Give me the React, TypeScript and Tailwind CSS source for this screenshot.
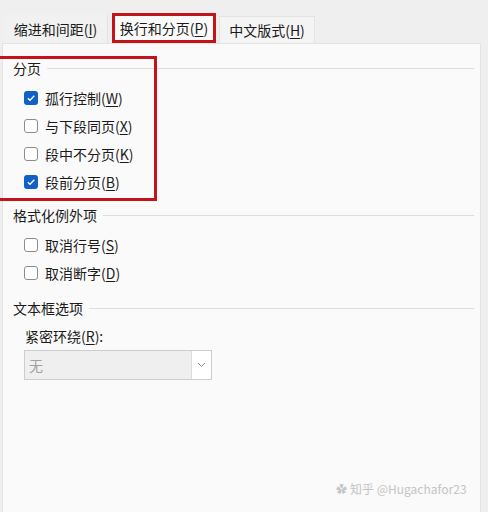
import React from "react";

const font = { fontFamily: '"Noto Sans CJK SC", "Noto Sans", sans-serif' };

function Check({ checked }: { checked: boolean }) {
  if (checked) {
    return (
      <span className="w-[14px] h-[14px] rounded-[3px] bg-[#1160c4] flex items-center justify-center">
        <svg width="10" height="10" viewBox="0 0 10 10">
          <path d="M1.8 5.2 L4 7.3 L8.3 2.8" stroke="#fff" strokeWidth="1.3" fill="none" />
        </svg>
      </span>
    );
  }
  return <span className="w-[14px] h-[14px] rounded-[3px] border border-[#8c8c8c] bg-white" />;
}

function Row({ checked, label, k }: { checked: boolean; label: string; k: string }) {
  return (
    <div className="h-[28px] flex items-center pl-[21px] gap-[7px]">
      <Check checked={checked} />
      <span className="text-[14px] text-[#1a1a1a] leading-none">
        {label}(<span className="underline underline-offset-2">{k}</span>)
      </span>
    </div>
  );
}

function Heading({ text, mt }: { text: string; mt: string }) {
  return (
    <div className={`h-[20px] flex items-center pl-[10px] pr-[6px] ${mt}`}>
      <span className="text-[14px] text-[#1a1a1a] leading-none mr-[6px]">{text}</span>
      <div className="flex-1 h-px bg-[#dedede]" />
    </div>
  );
}

export default function App() {
  return (
    <div className="w-[488px] h-[512px] bg-[#efefef] relative overflow-hidden flex flex-col" style={font}>
      <div className="flex items-end pl-[4px] pt-[13px] h-[43px]">
        <div className="h-[28px] w-[104px] flex items-center justify-center text-[14px] text-[#1a1a1a] border-r border-[#e2e2e2] bg-[#f1f1f1]">
          缩进和间距(<span className="underline underline-offset-2">I</span>)
        </div>
        <div className="h-[30px] w-[104px] ml-[4px] flex items-center justify-center text-[14px] text-[#1a1a1a] border-[3px] border-[#c3141b] bg-[#fafafa]">
          换行和分页(<span className="underline underline-offset-2">P</span>)
        </div>
        <div className="h-[27px] w-[96px] ml-[3px] flex items-center justify-center text-[14px] text-[#1a1a1a] border border-b-0 border-[#e3e3e3] bg-[#f4f4f4]">
          中文版式(<span className="underline underline-offset-2">H</span>)
        </div>
      </div>
      <div className="ml-[2px] w-[479px] flex-1 bg-[#fafafa] border-l border-r border-t border-[#e3e3e3] flex flex-col">
        <Heading text="分页" mt="mt-[14px]" />
        <div className="mt-[6px]">
          <Row checked label="孤行控制" k="W" />
          <Row checked={false} label="与下段同页" k="X" />
          <Row checked={false} label="段中不分页" k="K" />
          <Row checked label="段前分页" k="B" />
        </div>
        <Heading text="格式化例外项" mt="mt-[9px]" />
        <div className="mt-[6px]">
          <Row checked={false} label="取消行号" k="S" />
          <Row checked={false} label="取消断字" k="D" />
        </div>
        <Heading text="文本框选项" mt="mt-[11px]" />
        <div className="mt-[8px] h-[20px] flex items-center pl-[22px] text-[14px] text-[#1a1a1a] leading-none">
          紧密环绕(<span className="underline underline-offset-2">R</span>):
        </div>
        <div className="mt-[4px] ml-[21px] w-[188px] h-[30px] flex border border-[#cdcdcd] bg-[#efefef]">
          <div className="flex-1 flex items-center pl-[4px] text-[14px] text-[#a0a0a0]">无</div>
          <div className="w-[20px] bg-white border-l border-[#dcdcdc] flex items-center justify-center">
            <svg width="9" height="6" viewBox="0 0 9 6">
              <path d="M1 1 L4.5 4.5 L8 1" stroke="#8a8a8a" strokeWidth="1" fill="none" />
            </svg>
          </div>
        </div>
      </div>
      <div className="absolute left-[336px] top-[483px] flex items-center gap-[3px] text-[12px] text-[#c4c4c4] whitespace-nowrap leading-none">
        <span className="text-[11px]">✿</span>
        <span>知乎 @Hugachafor23</span>
      </div>
      <div className="absolute left-[-3px] top-[56px] w-[160px] h-[145px] border-[3px] border-[#c3141b]" />
    </div>
  );
}
